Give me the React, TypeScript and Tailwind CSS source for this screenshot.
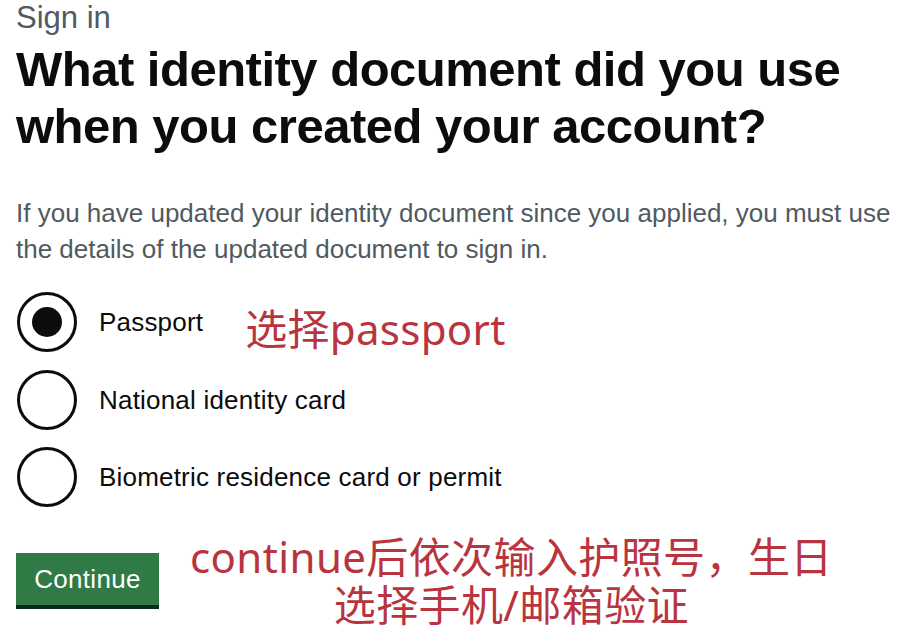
import React, { useState } from 'react';

const options = [
  { id: 'passport', label: 'Passport' },
  { id: 'national', label: 'National identity card' },
  { id: 'brp', label: 'Biometric residence card or permit' },
];

const Radio: React.FC<{ checked: boolean }> = ({ checked }) => (
  <span className="flex h-[60px] w-[60px] shrink-0 items-center justify-center rounded-full border-[3px] border-[#0b0c0c] bg-white">
    {checked && <span className="h-[30px] w-[30px] rounded-full bg-[#0b0c0c]" />}
  </span>
);

const App: React.FC = () => {
  const [selected, setSelected] = useState('passport');

  return (
    <div className="min-h-[634px] w-[920px] bg-white pl-4 font-['Liberation_Sans','Noto_Sans_CJK_SC',sans-serif] text-[#0b0c0c]">
      {/* Caption + heading */}
      <p className="text-[31px] leading-[36px] text-[#505a5f]">Sign in</p>
      <h1 className="mt-[5px] text-[49px] font-bold leading-[57px] tracking-[-0.5px]">
        What identity document did you use
        <br />
        when you created your account?
      </h1>

      {/* Hint */}
      <p className="mt-[40px] text-[26px] leading-[36px] text-[#505a5f]">
        If you have updated your identity document since you applied, you must use
        <br />
        the details of the updated document to sign in.
      </p>

      {/* Radios */}
      <div className="mt-[24px] flex flex-col gap-[17px]">
        {options.map((opt) => (
          <label
            key={opt.id}
            className="flex cursor-pointer items-center gap-[22px] pl-[1px]"
            onClick={() => setSelected(opt.id)}
          >
            <Radio checked={selected === opt.id} />
            <span className="text-[26px] leading-[30px] tracking-[0.2px]">{opt.label}</span>
            {opt.id === 'passport' && (
              <span className="ml-[20px] mt-[14px] font-['Noto_Sans','Noto_Sans_CJK_SC',sans-serif] text-[42px] leading-[48px] tracking-[0.3px] text-[#b8343f]">
                选择passport
              </span>
            )}
          </label>
        ))}
      </div>

      {/* Button + note */}
      <div className="mt-[20px] flex items-start">
        <button className="mt-[26px] h-[56px] w-[143px] border-b-4 border-[#0b2a17] bg-[#2f7a45] text-[26px] leading-[52px] tracking-[0.3px] text-white">
          Continue
        </button>
        <p className="ml-[31px] mt-[6px] text-center font-['Noto_Sans','Noto_Sans_CJK_SC',sans-serif] text-[42px] leading-[48px] tracking-[0.4px] text-[#b8343f]">
          continue后依次输入护照号，生日
          <br />
          选择手机/邮箱验证
        </p>
      </div>
    </div>
  );
};

export default App;
